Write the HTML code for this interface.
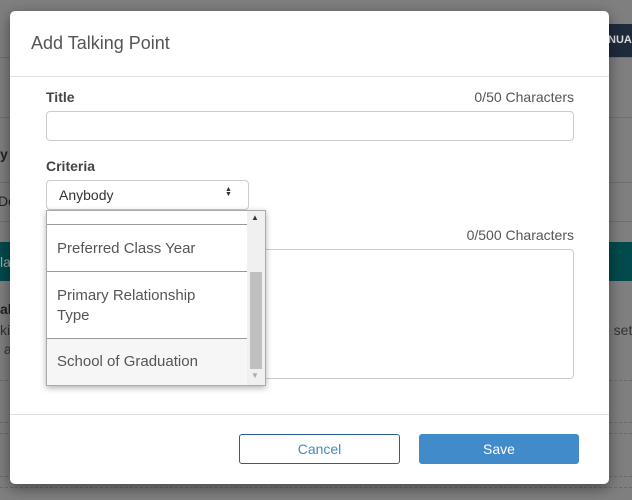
<!DOCTYPE html>
<html><head><style>
*{box-sizing:border-box;margin:0;padding:0}
body{width:632px;height:500px;background:#7f7f7f;font-family:"Liberation Sans",sans-serif;position:relative;overflow:hidden;color:#555}
.abs{position:absolute;white-space:nowrap}
.modal{position:absolute;left:10px;top:11px;width:599px;height:473px;background:#fff;border-radius:5px;box-shadow:0 4px 14px rgba(0,0,0,.45)}
</style></head><body>
<div class="abs" style="left:600px;top:24px;width:32px;height:33px;background:#1e2b3c;color:#ddd;font-size:11px;font-weight:bold;line-height:33px;padding-left:8px">NUA</div>
<div class="abs" style="left:0;top:57px;width:632px;height:1px;background:#707070"></div>
<div class="abs" style="left:0;top:117px;width:632px;height:1px;background:#707070"></div>
<div class="abs" style="left:0;top:146px;font-size:14px;font-weight:bold;color:#222">y</div>
<div class="abs" style="left:0;top:182px;width:632px;height:40px;border-top:1px solid #6f6f6f;border-bottom:1px solid #6f6f6f"></div>
<div class="abs" style="left:-2px;top:193px;font-size:14px;color:#222">Do</div>
<div class="abs" style="left:0;top:242px;width:632px;height:39px;background:#024a4c"></div>
<div class="abs" style="left:0;top:254px;font-size:14px;color:#aaa">la</div>
<div class="abs" style="left:0;top:301px;font-size:14px;font-weight:bold;color:#222">al</div>
<div class="abs" style="left:0;top:322px;font-size:14px;color:#333">kir</div>
<div class="abs" style="left:0;top:341px;font-size:14px;color:#333">&nbsp;a</div>
<div class="abs" style="left:602px;top:322px;font-size:14px;color:#333">e set</div>
<div class="abs" style="left:0;top:380px;width:632px;border-top:1px dashed #6a6a6a"></div>
<div class="abs" style="left:0;top:422px;width:632px;border-top:1px dashed #6a6a6a"></div>
<div class="abs" style="left:0;top:433px;width:632px;border-top:1px dashed #6a6a6a"></div>
<div class="abs" style="left:0;top:476px;width:632px;border-top:1px dashed #6a6a6a"></div>
<div class="abs" style="left:0;top:487px;width:632px;border-top:1px dashed #6a6a6a"></div>

<div class="modal">
  <div class="abs" style="left:21px;top:22px;font-size:18px;color:#555">Add Talking Point</div>
  <div class="abs" style="left:0;top:65px;width:599px;height:1px;background:#e0e0e0"></div>
  <div class="abs" style="left:36px;top:78px;font-size:14px;font-weight:bold;color:#444">Title</div>
  <div class="abs" style="right:35px;top:78px;font-size:14px;color:#555">0/50 Characters</div>
  <div class="abs" style="left:36px;top:100px;width:528px;height:30px;border:1px solid #ccc;border-radius:4px"></div>
  <div class="abs" style="left:36px;top:147px;font-size:14px;font-weight:bold;color:#444">Criteria</div>
  <div class="abs" style="left:36px;top:169px;width:203px;height:30px;border:1px solid #ccc;border-radius:4px;font-size:14px;color:#333;padding:6px 0 0 12px">Anybody<span style="position:absolute;left:178px;top:6px;font-size:7px;line-height:5px;color:#333">▲<br>▼</span></div>
  <div class="abs" style="right:35px;top:216px;font-size:14px;color:#555">0/500 Characters</div>
  <div class="abs" style="left:36px;top:238px;width:528px;height:130px;border:1px solid #ccc;border-radius:4px"></div>
  <div class="abs" style="left:36px;top:199px;width:220px;height:176px;background:#fff;border:1px solid #aaa;box-shadow:0 2px 6px rgba(0,0,0,.3);overflow:hidden">
    <div class="abs" style="left:0;top:0;width:200px;height:14px;border-bottom:1px solid #999"></div>
    <div class="abs" style="left:0;top:14px;width:200px;height:47px;border-bottom:1px solid #999;font-size:15px;color:#555;padding:15px 0 0 10px">Preferred Class Year</div>
    <div class="abs" style="left:0;top:61px;width:200px;height:67px;border-bottom:1px solid #999;font-size:15px;color:#555;padding:14px 0 0 10px;line-height:20px">Primary Relationship<br>Type</div>
    <div class="abs" style="left:0;top:128px;width:200px;height:48px;background:#f6f6f6;font-size:15px;color:#555;padding:14px 0 0 10px">School of Graduation</div>
    <div class="abs" style="left:200px;top:0;width:18px;height:176px;background:#f0f0f0"></div>
    <div class="abs" style="left:203px;top:61px;width:12px;height:97px;background:#c0c0c0"></div>
    <div class="abs" style="left:204px;top:2px;font-size:8px;color:#333">▲</div>
    <div class="abs" style="left:204px;top:160px;font-size:8px;color:#aaa">▼</div>
  </div>
  <div class="abs" style="left:0;top:403px;width:599px;height:1px;background:#e0e0e0"></div>
  <div class="abs" style="left:229px;top:423px;width:161px;height:30px;border:1px solid #2a5f8f;border-radius:3px;font-size:14px;color:#4a88c0;text-align:center;line-height:28px">Cancel</div>
  <div class="abs" style="left:409px;top:423px;width:160px;height:30px;background:#428bca;border-radius:3px;font-size:14px;color:#fff;text-align:center;line-height:30px">Save</div>
</div>
</body></html>
